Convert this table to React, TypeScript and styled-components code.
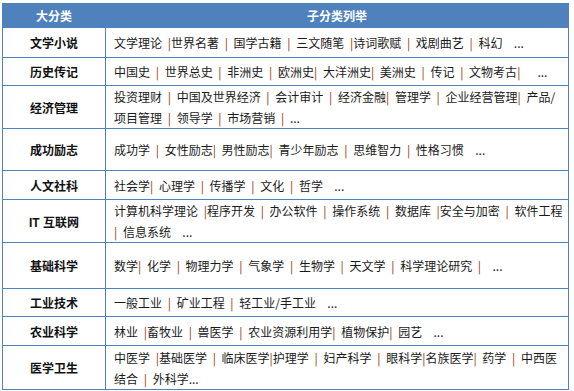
import React from 'react'
import styled, { createGlobalStyle } from 'styled-components'

const GlobalStyle = createGlobalStyle`
  html, body {
    margin: 0;
    padding: 0;
    background: #ffffff;
  }
  body {
    font-family: "Noto Sans CJK SC", "Liberation Sans", sans-serif;
    color: #1a1a1a;
  }
`

const Page = styled.div`
  padding: 3px 0 0 2px;
`

const Table = styled.table`
  width: 567px;
  border-collapse: collapse;
  table-layout: fixed;
  font-size: 12px;
`

const HeadCell = styled.th<{ $w?: number }>`
  ${({ $w }) => ($w ? `width: ${$w}px;` : '')}
  height: 23px;
  padding: 0;
  background: #4f81bd;
  border: 1px solid #4f81bd;
  color: #ffffff;
  font-weight: bold;
  text-align: center;
  vertical-align: middle;
  line-height: 22px;
`

const Row = styled.tr<{ $h: number }>`
  height: ${({ $h }) => $h}px;
`

const Label = styled.td`
  padding: 0;
  border: 1px solid #4f81bd;
  font-family: "Liberation Sans", "Noto Sans CJK SC", sans-serif;
  font-weight: bold;
  font-size: 12px;
  color: #111;
  text-align: center;
  vertical-align: middle;
`

const Items = styled.td`
  padding: 0 0 0 8px;
  border: 1px solid #4f81bd;
  vertical-align: middle;
  line-height: 21px;
  color: #1a1a1a;
  white-space: pre;
  word-spacing: 3px;
`

const Sep = styled.span`
  color: #993300;
`

type Category = { name: string; h: number; lines: string[] }

const data: Category[] = [
  { name: '文学小说', h: 30, lines: ['文学理论 |世界名著 | 国学古籍 | 三文随笔 |诗词歌赋 | 戏剧曲艺 | 科幻  ...'] },
  { name: '历史传记', h: 28, lines: ['中国史 | 世界总史 | 非洲史 | 欧洲史| 大洋洲史| 美洲史 | 传记 | 文物考古|   ...'] },
  {
    name: '经济管理',
    h: 43,
    lines: ['投资理财 | 中国及世界经济 | 会计审计 | 经济金融| 管理学 | 企业经营管理| 产品/', '项目管理 | 领导学 | 市场营销 | ...'],
  },
  { name: '成功励志', h: 42, lines: ['成功学 | 女性励志| 男性励志| 青少年励志 | 思维智力 | 性格习惯  ...'] },
  { name: '人文社科', h: 29, lines: ['社会学| 心理学 | 传播学 | 文化 | 哲学  ...'] },
  {
    name: 'IT 互联网',
    h: 43,
    lines: ['计算机科学理论 |程序开发 | 办公软件 | 操作系统 | 数据库 |安全与加密 | 软件工程', '| 信息系统  ...'],
  },
  { name: '基础科学', h: 46, lines: ['数学| 化学 | 物理力学 | 气象学 | 生物学 | 天文学 | 科学理论研究 |  ...'] },
  { name: '工业技术', h: 28, lines: ['一般工业 | 矿业工程 | 轻工业/手工业  ...'] },
  { name: '农业科学', h: 29, lines: ['林业 |畜牧业 | 兽医学 | 农业资源利用学| 植物保护| 园艺  ...'] },
  {
    name: '医学卫生',
    h: 44,
    lines: ['中医学 |基础医学 | 临床医学|护理学 | 妇产科学 | 眼科学|名族医学| 药学 | 中西医', '结合 | 外科学...'],
  },
]

// split a line on "|" so the separators get their own colour
const ItemLine = ({ text }: { text: string }) => {
  const parts = text.split('|')
  return (
    <div>
      {parts.map((p, i) => (
        <React.Fragment key={i}>
          {i > 0 && <Sep>|</Sep>}
          {p}
        </React.Fragment>
      ))}
    </div>
  )
}

const App = () => {
  return (
    <Page>
      <GlobalStyle />
      <Table>
        <thead>
          <tr>
            <HeadCell $w={102}>大分类</HeadCell>
            <HeadCell>子分类列举</HeadCell>
          </tr>
        </thead>
        <tbody>
          {data.map((c) => (
            <Row key={c.name} $h={c.h}>
              <Label>{c.name}</Label>
              <Items>
                {c.lines.map((l, i) => (
                  <ItemLine key={i} text={l} />
                ))}
              </Items>
            </Row>
          ))}
        </tbody>
      </Table>
    </Page>
  )
}

export default App
